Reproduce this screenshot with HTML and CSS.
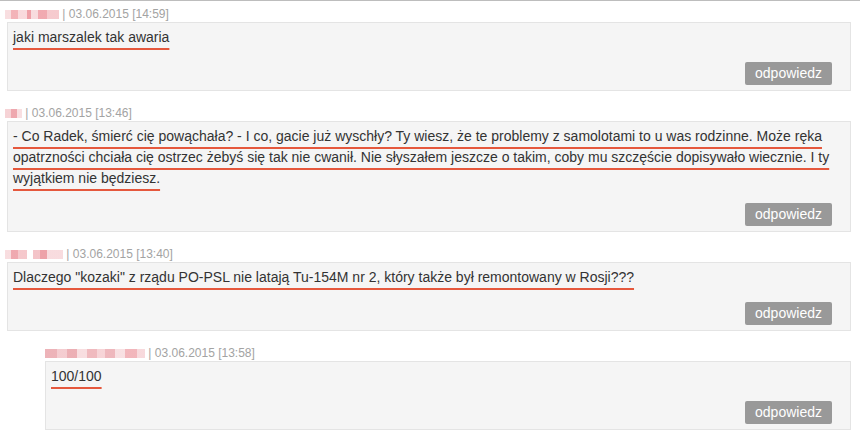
FILE: index.html
```html
<!DOCTYPE html>
<html lang="pl">
<head>
<meta charset="utf-8">
<title>Komentarze</title>
<link rel="stylesheet" href="styles.css">
</head>
<body>
<div class="comments">
  <div class="comment">
    <div class="meta"><span class="nick n1"></span> | 03.06.2015 [14:59]</div>
    <div class="box">
      <p class="text"><span class="u">jaki marszalek tak awaria</span></p>
      <div class="actions"><button class="reply">odpowiedz</button></div>
    </div>
  </div>
  <div class="comment">
    <div class="meta"><span class="nick n2"></span> | 03.06.2015 [13:46]</div>
    <div class="box">
      <p class="text"><span class="u">- Co Radek, śmierć cię powąchała? - I co, gacie już wyschły? Ty wiesz, że te problemy z samolotami to u was rodzinne. Może ręka opatrzności chciała cię ostrzec żebyś się tak nie cwanił. Nie słyszałem jeszcze o takim, coby mu szczęście dopisywało wiecznie. I ty wyjątkiem nie będziesz.</span></p>
      <div class="actions"><button class="reply">odpowiedz</button></div>
    </div>
  </div>
  <div class="comment">
    <div class="meta"><span class="nick n3"></span> | 03.06.2015 [13:40]</div>
    <div class="box">
      <p class="text"><span class="u">Dlaczego "kozaki" z rządu PO-PSL nie latają Tu-154M nr 2, który także był remontowany w Rosji???</span></p>
      <div class="actions"><button class="reply">odpowiedz</button></div>
    </div>
  </div>
  <div class="comment reply-comment">
    <div class="meta"><span class="nick n4"></span> | 03.06.2015 [13:58]</div>
    <div class="box">
      <p class="text"><span class="u">100/100</span></p>
      <div class="actions"><button class="reply">odpowiedz</button></div>
    </div>
  </div>
</div>
</body>
</html>
```
FILE: styles.css
```css
html, body {
  margin: 0;
  padding: 0;
  background: #fff;
}
body {
  font-family: "Liberation Sans", Arial, sans-serif;
  color: #333;
}
.comments {
  border-top: 1px solid #bdbdbd;
  padding: 5px 9px 0 5px;
}
.comment {
  margin-bottom: 14px;
}
.reply-comment {
  margin-left: 40px;
}
.meta {
  font-size: 12px;
  line-height: 16px;
  color: #a3a3a3;
  white-space: pre;
}
.nick {
  display: inline-block;
  height: 9px;
  vertical-align: -1px;
  opacity: 0.75;
}
.n1 {
  width: 54px;
  background: linear-gradient(90deg, #f6d3d6 0 12%, #ef9aa1 12% 25%, #f7cdd1 25% 40%, #e9808a 40% 48%, #f5d0d3 48% 62%, #ec8e97 62% 78%, #f3b9be 78% 100%);
}
.n2 {
  width: 17px;
  background: linear-gradient(90deg, #f3c4c8 0 35%, #e98b94 35% 70%, #f6d4d7 70% 100%);
}
.n3 {
  width: 58px;
  background: linear-gradient(90deg, #f6d2d5 0 10%, #ea8c95 10% 22%, #f2b6bb 22% 38%, #fff 38% 48%, #f0b0b6 48% 60%, #e7838c 60% 72%, #f6d0d4 72% 100%);
}
.n4 {
  width: 100px;
  background: linear-gradient(90deg, #e79aa1 0 12%, #f1bcc1 12% 22%, #e6959c 22% 32%, #f6d3d6 32% 42%, #eba3a9 42% 52%, #f4c6ca 52% 60%, #e9a0a7 60% 70%, #f6d6d9 70% 80%, #ee9ea5 80% 92%, #f5cdd1 92% 100%);
}
.box {
  margin-left: 2px;
  background: #f5f5f5;
  border: 1px solid #e4e4e4;
  padding: 4px 18px 5px 5px;
}
.reply-comment .box {
  margin-left: 0;
}
.text {
  margin: 0;
  font-size: 14px;
  line-height: 21px;
  color: #333;
}
.u {
  text-decoration: underline;
  text-decoration-color: #e5583d;
  text-decoration-thickness: 2px;
  text-underline-offset: 6px;
  text-decoration-skip-ink: none;
}
.actions {
  display: flex;
  justify-content: flex-end;
  margin-top: 14px;
}
.reply {
  font-family: "Liberation Sans", Arial, sans-serif;
  font-size: 14px;
  height: 23px;
  width: 87px;
  padding: 0;
  border: none;
  border-radius: 2px;
  background: #999;
  color: #fff;
  line-height: 23px;
  cursor: pointer;
}
```
